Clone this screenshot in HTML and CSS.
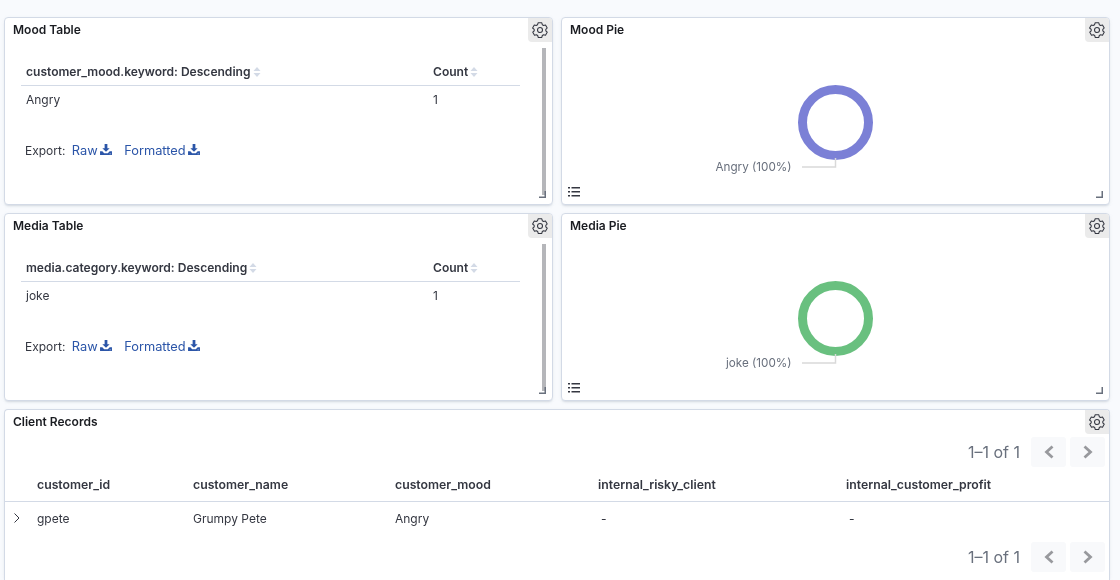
FILE: index.html
```html
<!DOCTYPE html>
<html lang="en">
<head>
<meta charset="utf-8">
<title>Dashboard</title>
<link rel="stylesheet" href="styles.css">
</head>
<body>
<svg class="defs" width="0" height="0" aria-hidden="true">
  <defs>
    <symbol id="gear" viewBox="0 0 16 16">
      <path fill="none" stroke="currentColor" stroke-width="1.050" stroke-linejoin="round" d="M6.200 .8h3.600l.5 1.900 1.300.8 1.900-.5 1.700 3-1.400 1.400v1.400l1.400 1.400-1.700 3-1.900-.5-1.300.8-.5 1.900H6.200l-.5-1.900-1.300-.8-1.900.5-1.700-3 1.400-1.400V7.400L.6 6l1.700-3 1.900.5 1.300-.8z"/>
      <circle cx="8" cy="8" r="2.500" fill="none" stroke="currentColor" stroke-width="1.050"/>
    </symbol>
    <symbol id="sort" viewBox="0 0 8 10">
      <path fill="currentColor" d="M4 0l3.500 4h-7zM4 10L.5 6h7z"/>
    </symbol>
    <symbol id="download" viewBox="0 0 13 12">
      <path fill="currentColor" d="M5 0h3v4.500h2.500L6.500 8.500l-4-4H5zM0 8h2.500l2 2h4l2-2H13v4H0zm10.500 2.300v.8h1v-.8z"/>
    </symbol>
    <symbol id="legend" viewBox="0 0 12 10">
      <path fill="currentColor" d="M0 0h2v1.500H0zm3.500 0H12v1.500H3.500zM0 4h2v1.500H0zm3.500 0H12v1.500H3.500zM0 8h2v1.500H0zm3.500 0H12v1.500H3.500z"/>
    </symbol>
    <symbol id="corner" viewBox="0 0 7 7">
      <path fill="none" stroke="currentColor" stroke-width="1.500" d="M0 6.250h6.250V0"/>
    </symbol>
  </defs>
</svg>

<main class="dashboard">
  <section class="panel">
    <h2 class="panel-title">Mood Table</h2>
    <button class="gear-btn" type="button" aria-label="Options"><svg class="gear"><use href="#gear"/></svg></button>
    <div class="table-vis">
      <table class="data-table">
        <thead><tr><th class="col-key">customer_mood.keyword: Descending <svg class="sort"><use href="#sort"/></svg></th><th>Count <svg class="sort"><use href="#sort"/></svg></th></tr></thead>
        <tbody><tr><td>Angry</td><td>1</td></tr></tbody>
      </table>
      <p class="export">Export: <a class="export-link">Raw <svg class="dl"><use href="#download"/></svg></a><a class="export-link">Formatted <svg class="dl"><use href="#download"/></svg></a></p>
    </div>
    <span class="scrollbar"></span>
    <svg class="corner"><use href="#corner"/></svg>
  </section>

  <section class="panel">
    <h2 class="panel-title">Mood Pie</h2>
    <button class="gear-btn" type="button" aria-label="Options"><svg class="gear"><use href="#gear"/></svg></button>
    <div class="pie-vis">
      <svg class="pie" viewBox="0 0 300 110" width="300" height="110">
        <circle class="ring ring-mood" cx="149.500" cy="37.500" r="33"/>
        <path class="leader" d="M116 82h33.500v-9"/>
        <text class="pie-label" x="105.500" y="86" text-anchor="end">Angry (100%)</text>
      </svg>
    </div>
    <svg class="legend"><use href="#legend"/></svg>
    <svg class="corner"><use href="#corner"/></svg>
  </section>

  <section class="panel">
    <h2 class="panel-title">Media Table</h2>
    <button class="gear-btn" type="button" aria-label="Options"><svg class="gear"><use href="#gear"/></svg></button>
    <div class="table-vis">
      <table class="data-table">
        <thead><tr><th class="col-key">media.category.keyword: Descending <svg class="sort"><use href="#sort"/></svg></th><th>Count <svg class="sort"><use href="#sort"/></svg></th></tr></thead>
        <tbody><tr><td>joke</td><td>1</td></tr></tbody>
      </table>
      <p class="export">Export: <a class="export-link">Raw <svg class="dl"><use href="#download"/></svg></a><a class="export-link">Formatted <svg class="dl"><use href="#download"/></svg></a></p>
    </div>
    <span class="scrollbar"></span>
    <svg class="corner"><use href="#corner"/></svg>
  </section>

  <section class="panel">
    <h2 class="panel-title">Media Pie</h2>
    <button class="gear-btn" type="button" aria-label="Options"><svg class="gear"><use href="#gear"/></svg></button>
    <div class="pie-vis">
      <svg class="pie" viewBox="0 0 300 110" width="300" height="110">
        <circle class="ring ring-media" cx="149.500" cy="37.500" r="33"/>
        <path class="leader" d="M116 82h33.500v-9"/>
        <text class="pie-label" x="105.500" y="86" text-anchor="end">joke (100%)</text>
      </svg>
    </div>
    <svg class="legend"><use href="#legend"/></svg>
    <svg class="corner"><use href="#corner"/></svg>
  </section>

  <section class="panel panel-wide">
    <h2 class="panel-title">Client Records</h2>
    <button class="gear-btn" type="button" aria-label="Options"><svg class="gear"><use href="#gear"/></svg></button>
    <div class="pager">
      <span>1–1 of 1</span>
      <span class="page-btn"><svg class="chev" viewBox="0 0 10 14"><path d="M8.500 1.500L2.500 7l6 5.500"/></svg></span>
      <span class="page-btn"><svg class="chev" viewBox="0 0 10 14"><path d="M1.500 1.500l6 5.500-6 5.500"/></svg></span>
    </div>
    <div class="records-head">
      <span class="c1">customer_id</span><span class="c2">customer_name</span><span class="c3">customer_mood</span><span class="c4">internal_risky_client</span><span class="c5">internal_customer_profit</span>
    </div>
    <div class="records-row">
      <svg class="expand" viewBox="0 0 8 12"><path d="M1.500 1.500L6 6l-4.500 4.500"/></svg>
      <span class="c1">gpete</span><span class="c2">Grumpy Pete</span><span class="c3">Angry</span><span class="c4 dash">-</span><span class="c5 dash">-</span>
    </div>
    <div class="pager pager-bottom">
      <span>1–1 of 1</span>
      <span class="page-btn"><svg class="chev" viewBox="0 0 10 14"><path d="M8.500 1.500L2.500 7l6 5.500"/></svg></span>
      <span class="page-btn"><svg class="chev" viewBox="0 0 10 14"><path d="M1.500 1.500l6 5.500-6 5.500"/></svg></span>
    </div>
  </section>
</main>
</body>
</html>
```
FILE: styles.css
```css
* { box-sizing: border-box; }
html, body { margin: 0; height: 580px; overflow: hidden; }
body {
  background: #f8fafd;
  font-family: Inter, "Noto Sans", sans-serif;
  font-size: 12px;
  color: #343741;
}
.defs { position: absolute; }
.dashboard {
  display: grid;
  grid-template-columns: 549px 549px;
  grid-template-rows: 188px 188px 171px;
  gap: 8px;
  padding: 17px 0 0 4px;
  will-change: transform;
}
.panel {
  position: relative;
  background: #fff;
  border: 1px solid #d3dae6;
  border-radius: 4px;
  box-shadow: 0 2px 2px -1px rgba(152, 162, 179, .3), 0 1px 5px -2px rgba(152, 162, 179, .3);
}
.panel-wide { grid-column: 1 / 3; border-bottom: 0; border-radius: 4px 4px 0 0; }
.panel-title {
  margin: 0;
  padding: 4px 8px 0;
  font-size: 12px;
  line-height: 16px;
  font-weight: 600;
  color: #1a1c21;
}
.gear-btn {
  position: absolute;
  top: 0;
  right: 0;
  width: 24px;
  height: 24px;
  padding: 0;
  border: 0;
  border-radius: 0 3px 0 4px;
  background: #ebebeb;
  color: #343741;
  display: flex;
  align-items: center;
  justify-content: center;
}
.gear { width: 16px; height: 16px; }
.table-vis { padding: 20px 32px 0 16px; }
.data-table { width: 499px; border-collapse: collapse; table-layout: fixed; }
.data-table th {
  text-align: left;
  font-weight: 600;
  font-size: 12.050px;
  padding: 0 5px;
  height: 27px;
  color: #343741;
  border-bottom: 1px solid #d3dae6;
  white-space: nowrap;
}
.col-key { width: 407px; }
.data-table td { padding: 0 5px; height: 28px; color: #343741; }
.sort { width: 8px; height: 10px; color: #d3dae6; margin-left: -1px; vertical-align: -1px; }
.export { margin: 30px 0 0 4px; line-height: 16px; color: #343741; }
.export-link { color: #2b55a8; margin-left: 3px; font-size: 12.800px; }
.export-link + .export-link { margin-left: 12px; }
.dl { width: 12px; height: 11px; vertical-align: 0; margin-left: -1px; }
.scrollbar {
  position: absolute;
  top: 30px;
  right: 6px;
  width: 4px;
  height: 147px;
  background: #b5b6ba;
}
.corner {
  position: absolute;
  right: 6px;
  bottom: 6px;
  width: 7px;
  height: 7px;
  color: #69707d;
}
.pie-vis { display: flex; justify-content: center; padding-top: 47px; }
.pie { display: block; }
.ring { fill: none; stroke-width: 9; }
.ring-mood { stroke: #7b80d6; }
.ring-media { stroke: #69c07f; }
.leader { fill: none; stroke: #d9d9d9; stroke-width: 1.500; }
.pie-label { font-size: 11.700px; fill: #69707d; font-family: Inter, "Noto Sans", sans-serif; }
.legend { position: absolute; left: 6px; bottom: 7px; width: 12px; height: 10px; color: #343741; }
.pager {
  display: flex;
  align-items: center;
  justify-content: flex-end;
  gap: 4px;
  height: 30px;
  margin-top: 7px;
  padding-right: 4px;
  font-size: 16px;
  color: #69707d;
}
.pager > span:first-child { margin-right: 7px; }
.page-btn {
  width: 35px;
  height: 30px;
  border-radius: 3px;
  background: #f8f9fb;
  display: flex;
  align-items: center;
  justify-content: center;
}
.chev { width: 10px; height: 14px; fill: none; stroke: #98999d; stroke-width: 2.800; }
.records-head, .records-row {
  display: grid;
  grid-template-columns: 32px 156px 202px 203px 248px 1fr;
  align-items: center;
  padding-right: 8px;
}
.records-head {
  height: 34px;
  margin-top: 1px;
  border-bottom: 1px solid #d3dae6;
  font-size: 12.250px;
  font-weight: 600;
  color: #343741;
}
.records-row { height: 32px; color: #343741; }
.dash { padding-left: 3px; }
.c1 { grid-column: 2; }
.c2 { grid-column: 3; }
.c3 { grid-column: 4; }
.c4 { grid-column: 5; }
.c5 { grid-column: 6; }
.expand { width: 8px; height: 12px; margin-left: 8px; fill: none; stroke: #343741; stroke-width: 1; }
.pager-bottom { margin-top: 8px; }
```
